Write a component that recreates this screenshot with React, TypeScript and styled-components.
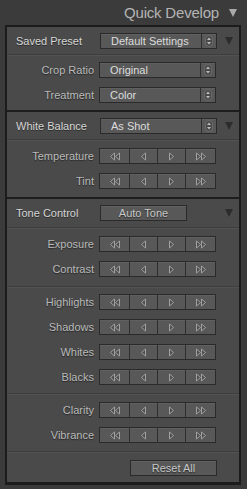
import React from "react"
import styled, { createGlobalStyle } from "styled-components"

const GlobalStyle = createGlobalStyle`
	html, body {
		margin: 0;
		padding: 0;
		background: #3b3b3b;
	}
	body {
		font-family: "Liberation Sans", Arial, sans-serif;
		-webkit-font-smoothing: antialiased;
	}
`

const Wrap = styled.div`
	width: 247px;
	height: 489px;
	box-sizing: border-box;
	padding: 0 6px 4px 5px;
	display: flex;
	flex-direction: column;
`

const Title = styled.div`
	height: 25px;
	display: flex;
	align-items: center;
	justify-content: flex-end;
	gap: 10px;
	padding-right: 4px;
	color: #b4b4b4;
	font-size: 15px;
	letter-spacing: -0.2px;
`

const Panel = styled.div`
	flex: 1;
	border: 2px solid #1c1c1c;
	border-bottom-width: 3px;
	background: #4a4a4a;
	display: flex;
	flex-direction: column;
`

const Section = styled.div<{ $last?: boolean }>`
	border-bottom: ${(p) => (p.$last ? "none" : "2px solid #1e1e1e")};
	${(p) => (p.$last ? "flex: 1;" : "")}
	display: flex;
	flex-direction: column;
`

const HeaderRow = styled.div<{ $height?: number }>`
	height: ${(p) => p.$height ?? 27}px;
	display: grid;
	grid-template-columns: 76px 117px 9px;
	column-gap: 8px;
	align-items: center;
	padding-left: 9px;
	border-bottom: 1px solid #3d3d3d;
	box-shadow: 0 1px 0 #535353;
`

const HeaderLabel = styled.span`
	color: #d6d6d6;
	font-size: 11px;
	text-shadow: 0 1px 0 #2a2a2a;
	white-space: nowrap;
`

const Group = styled.div<{ $top?: number; $bottom?: number; $line?: boolean }>`
	display: flex;
	flex-direction: column;
	gap: 9px;
	padding: ${(p) => p.$top ?? 7}px 0 ${(p) => p.$bottom ?? 8}px;
	${(p) =>
		p.$line ? "border-bottom: 1px solid #3d3d3d; box-shadow: 0 1px 0 #535353;" : ""}
`

const Row = styled.div`
	height: 16px;
	display: grid;
	grid-template-columns: 78px 117px;
	column-gap: 5px;
	align-items: center;
	padding-left: 9px;
`

const SubLabel = styled.span`
	text-align: right;
	color: #bababa;
	font-size: 11px;
	text-shadow: 0 1px 1px #262626;
	white-space: nowrap;
`

const Dropdown = styled.div`
	height: 16px;
	box-sizing: border-box;
	border: 1px solid #2a2a2a;
	background: #585858;
	box-shadow: inset 0 1px 0 #606060;
	display: flex;
	align-items: stretch;
	color: #dcdcdc;
	font-size: 11px;
`

const DropText = styled.span`
	flex: 1;
	padding-left: 10px;
	line-height: 14px;
	white-space: nowrap;
	overflow: hidden;
`

const DropArrows = styled.span`
	width: 14px;
	border-left: 1px solid #2f2f2f;
	display: flex;
	align-items: center;
	justify-content: center;
`

const Disclosure = styled.span<{ $light?: boolean }>`
	width: 0;
	height: 0;
	border-left: ${(p) => (p.$light ? 4 : 4.5)}px solid transparent;
	border-right: ${(p) => (p.$light ? 4 : 4.5)}px solid transparent;
	border-top: 8px solid ${(p) => (p.$light ? "#a9a9a9" : "#2c2c2c")};
`

const Button = styled.div<{ $width: number }>`
	width: ${(p) => p.$width}px;
	height: 16px;
	box-sizing: border-box;
	border: 1px solid #2a2a2a;
	background: #585858;
	box-shadow: inset 0 1px 0 #626262;
	color: #c8c8c8;
	font-size: 11px;
	line-height: 14px;
	text-align: center;
	text-shadow: 0 1px 1px #2a2a2a;
`

const FooterRow = styled.div`
	display: flex;
	justify-content: flex-end;
	padding: 8px 22px 0 0;
`

const Stepper = styled.div`
	height: 16px;
	box-sizing: border-box;
	border: 1px solid #2a2a2a;
	background: #585858;
	display: grid;
	grid-template-columns: 29px 28px 28px 1fr;
`

const Step = styled.span`
	display: flex;
	align-items: center;
	justify-content: center;
	box-shadow: inset 0 1px 0 #606060;
	& + & {
		border-left: 1px solid #2e2e2e;
	}
`

const Tri = ({ dir, double }: { dir: "l" | "r"; double?: boolean }) => {
	const one = (x: number) =>
		dir === "l"
			? `M${x + 4.5} 1 L${x + 0.5} 4.5 L${x + 4.5} 8 Z`
			: `M${x + 0.5} 1 L${x + 4.5} 4.5 L${x + 0.5} 8 Z`
	return (
		<svg width={double ? 10 : 5} height="9" viewBox={`0 0 ${double ? 10 : 5} 9`}>
			<path d={one(0)} fill="#4e4e4e" stroke="#a0a0a0" strokeWidth="1" strokeLinejoin="round" />
			{double && (
				<path d={one(5)} fill="#4e4e4e" stroke="#a0a0a0" strokeWidth="1" strokeLinejoin="round" />
			)}
		</svg>
	)
}

const UpDown = () => (
	<svg width="8" height="12" viewBox="0 0 8 12">
		<rect x="0.5" y="0.5" width="7" height="11" rx="3.5" fill="#4a4a4a" stroke="#6a6a6a" />
		<path d="M4 2.5 L6 5 L2 5 Z" fill="#bdbdbd" />
		<path d="M4 9.5 L6 7 L2 7 Z" fill="#bdbdbd" />
	</svg>
)

const Select = ({ value }: { value: string }) => (
	<Dropdown>
		<DropText>{value}</DropText>
		<DropArrows>
			<UpDown />
		</DropArrows>
	</Dropdown>
)

const StepControl = () => (
	<Stepper>
		<Step>
			<Tri dir="l" double />
		</Step>
		<Step>
			<Tri dir="l" />
		</Step>
		<Step>
			<Tri dir="r" />
		</Step>
		<Step>
			<Tri dir="r" double />
		</Step>
	</Stepper>
)

const StepRow = ({ label }: { label: string }) => (
	<Row>
		<SubLabel>{label}</SubLabel>
		<StepControl />
	</Row>
)

export default function App() {
	return (
		<>
			<GlobalStyle />
			<Wrap>
				<Title>
					<span>Quick Develop</span>
					<Disclosure $light />
				</Title>
				<Panel>
					<Section>
						<HeaderRow $height={27}>
							<HeaderLabel>Saved Preset</HeaderLabel>
							<Select value="Default Settings" />
							<Disclosure />
						</HeaderRow>
						<Group $top={7} $bottom={7}>
							<Row>
								<SubLabel>Crop Ratio</SubLabel>
								<Select value="Original" />
							</Row>
							<Row>
								<SubLabel>Treatment</SubLabel>
								<Select value="Color" />
							</Row>
						</Group>
					</Section>

					<Section>
						<HeaderRow $height={27}>
							<HeaderLabel>White Balance</HeaderLabel>
							<Select value="As Shot" />
							<Disclosure />
						</HeaderRow>
						<Group $top={8} $bottom={8}>
							<StepRow label="Temperature" />
							<StepRow label="Tint" />
						</Group>
					</Section>

					<Section $last>
						<HeaderRow $height={28}>
							<HeaderLabel>Tone Control</HeaderLabel>
							<Button $width={87}>Auto Tone</Button>
							<Disclosure />
						</HeaderRow>
						<Group $top={8} $bottom={9} $line>
							<StepRow label="Exposure" />
							<StepRow label="Contrast" />
						</Group>
						<Group $top={7} $bottom={8} $line>
							<StepRow label="Highlights" />
							<StepRow label="Shadows" />
							<StepRow label="Whites" />
							<StepRow label="Blacks" />
						</Group>
						<Group $top={8} $bottom={8} $line>
							<StepRow label="Clarity" />
							<StepRow label="Vibrance" />
						</Group>
						<FooterRow>
							<Button $width={87}>Reset All</Button>
						</FooterRow>
					</Section>
				</Panel>
			</Wrap>
		</>
	)
}
